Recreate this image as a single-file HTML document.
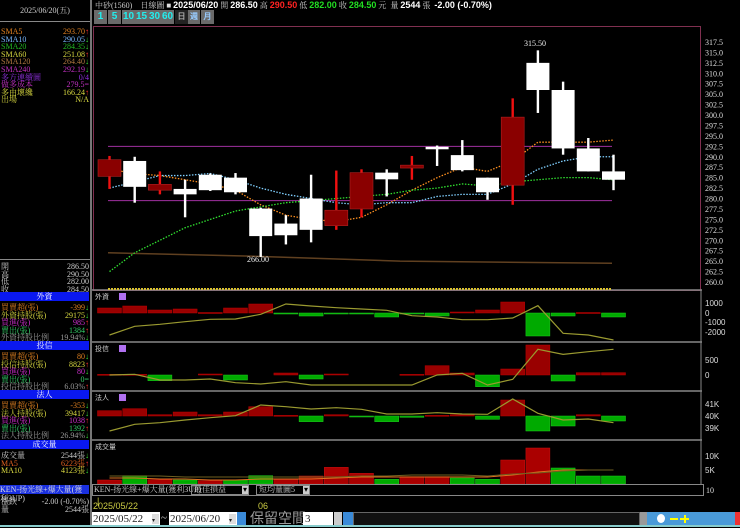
<!DOCTYPE html>
<html><head><meta charset="utf-8"><style>
*{margin:0;padding:0;box-sizing:border-box}
body{width:740px;height:527px;background:#000;overflow:hidden;position:relative;font-family:"Liberation Serif","Noto Serif CJK SC","Noto Sans CJK TC",serif;font-size:8px;color:#ddd}
.a{position:absolute;white-space:nowrap}
.row{position:absolute;left:1px;width:88px;height:9px;font-size:8px;line-height:9px}
.row .v{position:absolute;right:0;top:0}
.hd{position:absolute;left:0;width:89px;height:9px;background:#0a18f0;color:#fff;text-align:center;font-size:8px;line-height:9px}
.btn{position:absolute;top:10px;height:14px;background:#6a6a6a;color:#2ee;font:bold 10px "Liberation Sans",sans-serif;text-align:center;line-height:14px}
</style></head><body>
<!-- left panel -->
<div class="a" style="left:0;top:0;width:90px;height:21px;color:#ccc;text-align:center;line-height:22px;font-size:8px">2025/06/20(五)</div>
<div class="a" style="left:0;top:21px;width:90px;height:1px;background:#888"></div>
<div class="a" style="left:90px;top:0;width:2px;height:527px;background:#777"></div>
<div id="left"></div>
<!-- top bar -->
<div class="a" style="left:95px;top:0;font-size:8px;color:#ccc;line-height:9px">中砂(1560) &nbsp;&nbsp;&nbsp;日線圖 <span style="color:#ddd">■</span> <b style="font:bold 9px 'Liberation Sans',sans-serif;color:#fff">2025/06/20</b> 開 <b style="font:bold 9px 'Liberation Sans',sans-serif;color:#fff">286.50</b> 高 <b style="font:bold 9px 'Liberation Sans',sans-serif;color:#f22">290.50</b> 低 <b style="font:bold 9px 'Liberation Sans',sans-serif;color:#2d2">282.00</b> 收 <b style="font:bold 9px 'Liberation Sans',sans-serif;color:#2d2">284.50</b> 元 &nbsp;量 <b style="font:bold 9px 'Liberation Sans',sans-serif;color:#fff">2544</b> 張 &nbsp;<b style="font:bold 9px 'Liberation Sans',sans-serif;color:#fff">-2.00 (-0.70%)</b></div>
<div class="btn" style="left:94px;width:13px">1</div>
<div class="btn" style="left:108px;width:13px">5</div>
<div class="btn" style="left:122px;width:13px">10</div>
<div class="btn" style="left:135px;width:13px">15</div>
<div class="btn" style="left:148px;width:13px">30</div>
<div class="btn" style="left:161px;width:13px">60</div>
<div class="btn" style="left:175px;width:13px;background:#222;color:#aaa;font-size:8px">日</div>
<div class="btn" style="left:188px;width:12px;color:#9cf;font-size:8px">週</div>
<div class="btn" style="left:201px;width:13px;color:#9cf;font-size:8px">月</div>
<svg id="sv" class="a" style="left:0;top:0" width="740" height="527"></svg>
<!-- bottom -->
<div class="a" style="left:92px;top:484px;width:612px;height:12px;border:1px solid #888"></div>
<div class="a" style="left:94px;top:485px;color:#ccc;line-height:10px">KEN-扬光線+爆大量(獲利3UP)</div>
<div class="a" style="left:191px;top:485px;width:58px;height:10px;border:1px solid #888;color:#ccc;line-height:8px;padding-left:2px">最佳損益 <span style="float:right;background:#ccc;color:#000;width:6px;text-align:center">▾</span></div>
<div class="a" style="left:256px;top:485px;width:54px;height:10px;border:1px solid #888;color:#ccc;line-height:8px;padding-left:2px">短均量圖5 <span style="float:right;background:#ccc;color:#000;width:6px;text-align:center">▾</span></div>
<div class="a" style="left:706px;top:486px;color:#ddd">10</div>
<div class="a" style="left:97px;top:496px;color:#cc4;font:9px 'Liberation Sans',sans-serif">|<br></div>
<div class="a" style="left:93px;top:501px;color:#cc4;font:9px 'Liberation Sans',sans-serif">2025/05/22</div>
<div class="a" style="left:258px;top:501px;color:#cc4;font:9px 'Liberation Sans',sans-serif">06</div>
<div class="a" style="left:92px;top:512px;width:68px;height:14px;background:#fff;color:#222;font:11px 'Liberation Serif',serif;line-height:14px;padding-left:1px">2025/05/22<span style="position:absolute;right:1px;top:2px;width:7px;height:10px;background:#ddd;font-size:6px">▾</span></div>
<div class="a" style="left:161px;top:512px;color:#ccc;font-size:11px">~</div>
<div class="a" style="left:169px;top:512px;width:68px;height:14px;background:#fff;color:#222;font:11px 'Liberation Serif',serif;line-height:14px;padding-left:1px">2025/06/20<span style="position:absolute;right:1px;top:2px;width:7px;height:10px;background:#ddd;font-size:6px">▾</span></div>
<div class="a" style="left:237px;top:512px;width:9px;height:14px;background:#3a8ad8"></div>
<div class="a" style="left:250px;top:510px;color:#999;font:14px 'Noto Sans CJK TC',sans-serif;line-height:16px">保留空間</div>
<div class="a" style="left:303px;top:512px;width:30px;height:14px;background:#fff;color:#222;font-size:11px;line-height:14px;padding-left:2px">3</div>
<div class="a" style="left:334px;top:512px;width:8px;height:14px;background:#ccc"></div>
<div class="a" style="left:343px;top:512px;width:10px;height:14px;background:#3a8ad8"></div>
<div class="a" style="left:353px;top:512px;width:287px;height:14px;background:#111;border:1px solid #666"></div>
<div class="a" style="left:640px;top:512px;width:7px;height:14px;background:#999"></div>
<div class="a" style="left:647px;top:512px;width:88px;height:14px;background:#4a9ad8"></div>
<div class="a" style="left:657px;top:514px;width:8px;height:9px;border-radius:50%;background:#fff"></div>
<div class="a" style="left:670px;top:518px;width:8px;height:2px;background:#ff0"></div>
<div class="a" style="left:680px;top:518px;width:9px;height:2px;background:#ff0"></div>
<div class="a" style="left:683.5px;top:515px;width:2px;height:8px;background:#ff0"></div>
<div class="a" style="left:735px;top:512px;width:5px;height:14px;background:#e33"></div>
<div class="a" style="left:0;top:525px;width:740px;height:2px;background:#8cc"></div>
<script>
const L=document.getElementById('left');
function row(y,t,c,v,vc){L.insertAdjacentHTML('beforeend',`<div class="row" style="top:${y}px;color:${c}">${t}<span class="v" style="color:${vc||c}">${v}</span></div>`)}
const ma=[["SMA5","#e08020","293.70<span style='color:#f33'>↑</span>"],["SMA10","#7ab8ff","290.05<span style='color:#3d3'>↓</span>"],["SMA20","#22bb22","284.35<span style='color:#3d3'>↓</span>"],["SMA60","#d8d840","251.08<span style='color:#f33'>↑</span>"],["SMA120","#b07840","264.40<span style='color:#3d3'>↓</span>"],["SMA240","#c030c0","292.19<span style='color:#3d3'>↓</span>"],["多方連續圖","#9030e0","0/4"],["做多成本","#c030c0","279.5="],["多由壞纔","#d8d840","166.24<span style='color:#f33'>↑</span>"],["出場","#d8d840","N/A"]];
ma.forEach((m,i)=>row(27+i*7.6,m[0],m[1],m[2]));
L.insertAdjacentHTML('beforeend','<div class="a" style="left:0;top:259px;width:90px;height:1px;background:#888"></div>');
[["開","286.50"],["高","290.50"],["低","282.00"],["收","284.50"]].forEach((r,i)=>row(262+i*7.5,r[0],"#ccc",r[1]));
function sect(y,t,rows){L.insertAdjacentHTML('beforeend',`<div class="hd" style="top:${y}px">${t}</div>`);rows.forEach((r,i)=>row(y+11+i*7.6,r[0],r[1],r[2]));}
const G="<span style='color:#3d3'>↓</span>",R="<span style='color:#f33'>↑</span>";
sect(292,"外資",[["買賣超(張)","#e08020","-399"+G],["外資持股(張)","#d8d840","29175"+G],["買進(張)","#d030d0","985"+R],["賣出(張)","#33cc66","1384"+R],["外資持股比例","#999","19.94%"+G]]);
sect(341,"投信",[["買賣超(張)","#e08020","80"+G],["投信持股(張)","#d8d840","8823"+R],["買進(張)","#d030d0","80"+G],["賣出(張)","#33cc66","0="],["投信持股比例","#999","6.03%"+R]]);
sect(390,"法人",[["買賣超(張)","#e08020","-353"+G],["法人持股(張)","#d8d840","39417"+G],["買進(張)","#d030d0","1038"+R],["賣出(張)","#33cc66","1392"+R],["法人持股比例","#999","26.94%"+G]]);
sect(440,"成交量",[["成交量","#ccc","2544張"+G],["MA5","#e06020","6223張"+R],["MA10","#d8d840","4123張"+G]]);
L.insertAdjacentHTML('beforeend','<div class="hd" style="top:485px;text-align:left;background:#1a30e0;color:#ddd">KEN-扬光線+爆大量(獲利3UP)</div>');
row(497,"漲跌","#ccc","-2.00 (-0.70%)");row(505,"量","#ccc","2544張");

const S=document.getElementById('sv');let h='';
const P=p=>42+(317.5-p)*4.174;
const X=i=>109.5+i*25.2;
// frames
h+='<rect x="93.5" y="26.5" width="607" height="264" fill="none" stroke="#803050"/>';
[290,342,391,440].forEach(y=>h+=`<line x1="92" y1="${y}" x2="702" y2="${y}" stroke="#888" stroke-width="1.5"/>`);
h+='<line x1="701" y1="290" x2="701" y2="484" stroke="#888"/>';
// axis labels
for(let p=317.5,i=0;p>=259.9;p-=2.5,i++)h+=`<text x="705" y="${P(p)+3}" fill="#ddd" font-size="8" font-family="Liberation Serif">${p.toFixed(1)}</text>`;
// horizontal lines
h+=`<line x1="108" y1="${P(292.5)}" x2="612" y2="${P(292.5)}" stroke="#a030a0"/><line x1="108" y1="${P(279.5)}" x2="612" y2="${P(279.5)}" stroke="#a030a0"/>`;
h+=`<polyline points="108,${P(267)} 250,${P(266.2)} 400,${P(265)} 612,${P(264.5)}" fill="none" stroke="#604020" stroke-width="1.5"/>`;
h+=`<line x1="108" y1="289" x2="612" y2="289" stroke="#d8c030" stroke-width="2" stroke-dasharray="2,1"/>`;
// MAs
function ml(vals,c){h+=`<polyline points="${vals.map((v,i)=>X(i)+','+P(v)).join(' ')}" fill="none" stroke="${c}" stroke-width="1.3" stroke-dasharray="1.5,1.5"/>`}
ml([287,286,285.5,284.5,283.5,282,278.5,276,275,274.5,275.5,278.5,282,285,287.5,286.5,289,293.5,293.5,293.5,294],"#ff9020");
ml([282.5,284,285.5,285.5,286,284.5,282.5,281,280,279,278.5,279,279,280.5,281,281,283.5,287,289,290,290],"#80d0ff");
ml([262.5,267,270,273,275,277,278,279,279.5,280,280.5,281,282,282.5,283.5,283,284,284.5,285,285,284.5],"#30e030");
// candles
const C=[[289.3,285.3,290.2,282.3,'r'],[289,282.8,290,279,'w'],[283.4,282,286.5,281,'r'],[282.3,281,284.5,275.5,'w'],[285.7,282,286,281.8,'w'],[285,281.5,286.1,281,'w'],[277.6,271,277.8,266,'w'],[274,271.2,276,269,'w'],[280,272.5,285.7,269.5,'w'],[277.2,273.5,286.7,272.5,'r'],[286.2,277.5,287,275.5,'r'],[286.2,284.6,287,280.5,'w'],[288,287.3,290.2,284.5,'r'],[292.4,291.8,292.7,287.8,'w'],[290.4,286.8,294,286.5,'w'],[285,281.5,285,279.7,'w'],[299.5,283.2,304,278.5,'r'],[312.5,306,315.5,300.5,'w'],[306,292,308,290.5,'w'],[292,286.5,294.5,286.5,'w'],[286.5,284.5,290.5,282,'w']];
C.forEach((c,i)=>{const x=X(i),wc=c[4]=='r'?'#f01010':'#fff',bc=c[4]=='r'?'#8a0000':'#fff';
h+=`<rect x="${x-1.2}" y="${P(c[2])}" width="2.4" height="${P(c[3])-P(c[2])}" fill="${wc}"/>`;
h+=`<rect x="${x-11.5}" y="${P(c[0])}" width="23" height="${Math.max(1.5,P(c[1])-P(c[0]))}" fill="${bc}" ${c[4]=='r'?'stroke="#b02020" stroke-width="0.6"':''}/>`;});
h+=`<text x="524" y="46" fill="#eee" font-size="8" font-family="Liberation Serif">315.50</text><text x="247" y="262" fill="#eee" font-size="8" font-family="Liberation Serif">266.00</text>`;
// sub panels
function sub(y0,title,zero,bars,line,labels,scale){
h+=`<text x="95" y="${y0+8}" fill="#ccc" font-size="7" font-family="Noto Sans CJK TC">${title}</text><rect x="119" y="${y0+2}" width="7" height="7" fill="#b070f0"/>`;
bars.forEach((b,i)=>{const v=b*scale;if(Math.abs(v)<0.3)return;h+=`<rect x="${X(i)-12}" y="${v>0?zero-v:zero}" width="24" height="${Math.max(1,Math.abs(v))}" fill="${v>0?'#900':'#0a0'}" stroke="${v>0?'#b00':'#2c2'}" stroke-width="0.5"/>`;});
h+=`<polyline points="${line.map((v,i)=>X(i)+','+(285+v/3)).join(' ')}" fill="none" stroke="#9a9a30" stroke-width="1.2"/>`;
labels.forEach(l=>h+=`<text x="705" y="${l[1]+3}" fill="#ddd" font-size="8" font-family="Liberation Sans">${l[0]}</text>`);}
sub(291,"外資",313,[5,7,3,4,.5,5,9,-.5,-3,-.5,-.5,-4,-.5,-3,1,3,11,-23,-3,.5,-4],[150,124,118,110,103,102,88,57,63,68,72,76,92,96,104,104,99,62,145,150,165],[["1000",303],["0",313],["-1000",322],["-2000",332]],1);
sub(343,"投信",375,[2,2,-17,0,3,-15,0,6,-12,3,0,0,2,28,6,-35,18,90,-18,7,7],[270,268,285,285,282,293,297,290,300,300,300,300,300,270,265,300,283,193,208,200,193],[["500",360],["0",375]],1/3);
sub(392,"法人",416,[16,22,4,12,4,12,28,2,-17,4,-2,-17,-4,2,4,-10,48,-45,-30,4,-15],[438,418,413,405,398,392,360,365,372,368,373,387,387,383,387,388,342,385,405,402,413],[["41K",404],["40K",416],["39K",428]],1/3);
// volume
h+=`<text x="95" y="449" fill="#ccc" font-size="7" font-family="Noto Sans CJK TC">成交量</text>`;
const vol=[12,25,13,12,10,12,25,13,24,50,32,14,22,22,18,14,72,108,48,24,24],vc='rgrgrggrrrrgrrggrrggg';
vol.forEach((v,i)=>{const hh=v/3;h+=`<rect x="${X(i)-12}" y="${484-hh}" width="24" height="${hh}" fill="${vc[i]=='r'?'#a00':'#0a0'}" stroke="${vc[i]=='r'?'#c11':'#2c2'}" stroke-width="0.5"/>`;});
h+=`<polyline points="${[478,478,479,479,480,480,479,479,479,478,477,477,477,477,477,477,475,472,470,470,470].map((v,i)=>X(i)+','+v).join(' ')}" fill="none" stroke="#e07020" stroke-width="1"/>`;
h+=`<polyline points="${[476,476,476,477,477,477,477,477,477,477,476,476,475,475,475,476,474,473,471,470,470].map((v,i)=>X(i)+','+v).join(' ')}" fill="none" stroke="#706020" stroke-width="1"/>`;
[["10K",456],["5K",470]].forEach(l=>h+=`<text x="705" y="${l[1]+3}" fill="#ddd" font-size="8" font-family="Liberation Sans">${l[0]}</text>`);
S.innerHTML=h;
</script>
</body></html>
